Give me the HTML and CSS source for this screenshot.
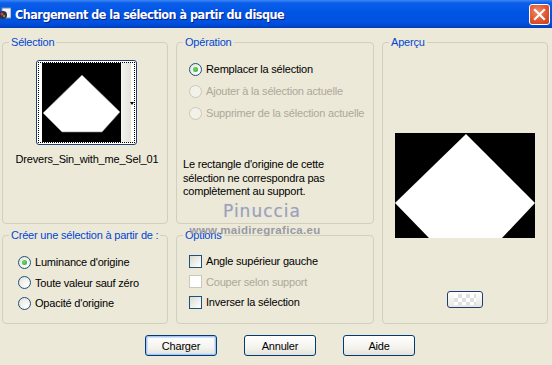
FILE: index.html
```html
<!DOCTYPE html>
<html lang="fr">
<head>
    <meta charset="UTF-8">
    <title>Chargement de la sélection à partir du disque</title>
    <link rel="stylesheet" href="styles.css">
</head>
<body>
<div class="window">
    <div class="titlebar">
        <span class="app-icon">
            <svg width="12" height="14" viewBox="0 0 12 14">
                <rect x="3" y="1" width="9" height="10" fill="#f4f4f4" stroke="#7b8ca8"/>
                <circle cx="4" cy="8" r="4" fill="#3a2b48"/>
                <circle cx="3" cy="7" r="1.5" fill="#d04040"/>
                <circle cx="5" cy="9" r="1.2" fill="#40b040"/>
            </svg>
        </span>
        <span class="title">Chargement de la sélection à partir du disque</span>
        <span class="close">
            <svg width="21" height="21" viewBox="0 0 21 21">
                <path d="M6 6 L15 15 M15 6 L6 15" stroke="#fff" stroke-width="2.2" stroke-linecap="square"/>
            </svg>
        </span>
    </div>

    <div class="body">
        <div class="groups">
            <fieldset class="group g-sel">
                <legend>Sélection</legend>
                <div class="thumb">
                    <div class="thumb-inner">
                        <svg class="thumb-img" width="79" height="79" viewBox="0 0 79 79">
                            <rect width="79" height="79" fill="#000"/>
                            <polygon points="40,12 78,49 60,69 20,69 1,50" fill="#fff" stroke="#888" stroke-width="0.6"/>
                        </svg>
                        <div class="thumb-strip"></div>
                        <span class="thumb-arrow"></span>
                    </div>
                </div>
                <div class="thumb-name">Drevers_Sin_with_me_Sel_01</div>
            </fieldset>

            <fieldset class="group g-op">
                <legend>Opération</legend>
                <div class="choices">
                    <label class="row"><span class="radio checked"></span>Remplacer la sélection</label>
                    <label class="row disabled"><span class="radio"></span>Ajouter à la sélection actuelle</label>
                    <label class="row disabled"><span class="radio"></span>Supprimer de la sélection actuelle</label>
                </div>
                <p class="hint">Le rectangle d'origine de cette<br>sélection ne correspondra pas<br>complètement au support.</p>
            </fieldset>

            <fieldset class="group g-prev">
                <legend>Aperçu</legend>
                <svg class="preview" width="140" height="105" viewBox="0 0 140 105">
                    <rect width="140" height="105" fill="#000"/>
                    <polygon points="71,1 140,70 107,105 34,105 0,70" fill="#fff"/>
                </svg>
                <span class="zoom-btn"><span class="checker"></span></span>
            </fieldset>

            <fieldset class="group g-src">
                <legend>Créer une sélection à partir de :</legend>
                <div class="choices tight">
                    <label class="row"><span class="radio checked"></span>Luminance d'origine</label>
                    <label class="row"><span class="radio"></span>Toute valeur sauf zéro</label>
                    <label class="row"><span class="radio"></span>Opacité d'origine</label>
                </div>
            </fieldset>

            <fieldset class="group g-opt">
                <legend>Options</legend>
                <div class="choices tight">
                    <label class="row"><span class="check"></span>Angle supérieur gauche</label>
                    <label class="row disabled"><span class="check"></span>Couper selon support</label>
                    <label class="row"><span class="check"></span>Inverser la sélection</label>
                </div>
            </fieldset>
        </div>

        <div class="buttons">
            <button class="btn default">Charger</button>
            <button class="btn">Annuler</button>
            <button class="btn">Aide</button>
        </div>
    </div>

    <div class="watermark">
        <span class="wm-name">Pinuccia</span>
        <span class="wm-url">www.maidiregrafica.eu</span>
    </div>
</div>
</body>
</html>
```

FILE: styles.css
```css
* { box-sizing: border-box; }
body { margin: 0; background: #ECE9D8; font-family: 'Liberation Sans', Arial, sans-serif; font-size: 11px; letter-spacing: -0.2px; color: #000; }
.window { position: relative; width: 552px; height: 365px; background: #ECE9D8; overflow: hidden; white-space: nowrap; }

/* title bar */
.titlebar {
    height: 28px;
    display: flex;
    align-items: center;
    background: linear-gradient(#3d86f5 0, #0a5ee8 3px, #0055e5 12px, #0052e0 22px, #0047d0 26px, #003cb8 28px);
}
.app-icon { width: 13px; height: 14px; display: flex; margin-left: -1px; }
.title {
    margin-left: 3px;
    color: #fff;
    font-family: 'DejaVu Sans Condensed', 'DejaVu Sans', sans-serif;
    font-weight: bold;
    font-size: 12.5px;
    letter-spacing: -0.5px;
    text-shadow: 1px 1px 0 #0a1e8a;
}
.close {
    margin-left: auto;
    margin-right: 2px;
    width: 21px;
    height: 21px;
    border: 1px solid #fff;
    border-radius: 3px;
    background: radial-gradient(circle at 40% 35%, #f08a6a 0, #e0552d 55%, #c2401c 100%);
    display: flex;
    align-items: center;
    justify-content: center;
}
.close svg { margin: -1px; }

/* layout */
.body { padding: 7px 3px 0 2px; }
.groups {
    display: grid;
    grid-template-columns: 166px 198px 166px;
    grid-template-rows: 189px 96px;
    column-gap: 8px;
    row-gap: 4px;
}
.group {
    margin: 0;
    padding: 0;
    min-width: 0;
    border: 1px solid #D0D0BF;
    border-radius: 4px;
}
.group legend {
    margin-left: 6px;
    padding: 0 2px;
    color: #0046D5;
    line-height: 14px;
}
.g-prev { grid-column: 3; grid-row: 1 / 3; display: flex; flex-direction: column; align-items: center; }
.g-src { grid-column: 1; grid-row: 2; }
.g-opt { grid-column: 2; grid-row: 2; }

/* selection thumbnail */
.g-sel { display: flex; flex-direction: column; align-items: center; }
.thumb {
    margin-top: 11px;
    margin-left: 2px;
    width: 101px;
    height: 85px;
    border: 1px solid #1c3f73;
    border-radius: 3px;
    padding: 1px;
    background: #fff;
}
.thumb-inner {
    position: relative;
    height: 100%;
    border: 1px dotted #000;
    display: flex;
    padding-left: 3px;
}
.thumb-img { display: block; }
.thumb-strip { width: 10px; background: linear-gradient(90deg, #f4f4f0, #e4e4dc); }
.thumb-arrow {
    position: absolute;
    right: 0;
    top: 39px;
    border-left: 2px solid transparent;
    border-right: 2px solid transparent;
    border-top: 3px solid #000;
}
.thumb-name { margin-top: 8px; margin-left: 4px; }

/* radio and check rows */
.choices { padding: 9px 0 0 12px; }
.g-src .choices { padding-left: 15px; padding-top: 10px; }
.row { display: flex; align-items: center; height: 22px; gap: 4px; }
.tight .row { height: 20.5px; }
.row.disabled { color: #ACA899; }
.radio {
    width: 13px;
    height: 13px;
    border-radius: 50%;
    border: 1px solid #1C5180;
    background: radial-gradient(circle at 70% 70%, #fff 0, #e8e6dc 80%);
    display: flex;
    align-items: center;
    justify-content: center;
}
.radio.checked::after {
    content: "";
    width: 5px;
    height: 5px;
    border-radius: 50%;
    background: radial-gradient(circle at 40% 40%, #6de06d, #21a121);
}
.row.disabled .radio { border-color: #CAC8BB; background: #F2F1EA; }
.check {
    width: 13px;
    height: 13px;
    border: 1px solid #1C5180;
    background: linear-gradient(135deg, #dcdbd2, #fff);
    margin-right: 0;
}
.row.disabled .check { border-color: #CAC8BB; background: #fff; }

.hint { margin: 34px 0 0 6px; line-height: 13.5px; }

/* preview */
.preview { margin-top: 84px; display: block; }
.zoom-btn {
    margin-top: 53px;
    width: 36px;
    height: 17px;
    border: 1px solid #1c3f73;
    border-radius: 3px;
    background: linear-gradient(#fff, #e8e6de);
    display: flex;
    align-items: center;
    justify-content: center;
}
.checker {
    width: 22px;
    height: 11px;
    background-image: conic-gradient(#e0e0e0 25%, #fff 0 50%, #e0e0e0 0 75%, #fff 0);
    background-size: 8px 8px;
}

/* buttons */
.buttons { display: flex; justify-content: center; gap: 27px; margin-top: 11px; padding-left: 9px; }
.btn {
    width: 72px;
    height: 21px;
    padding: 0;
    font-family: inherit;
    font-size: 11px;
    letter-spacing: -0.2px;
    color: #000;
    border: 1px solid #003C74;
    border-radius: 3px;
    background: linear-gradient(#fff 0, #f4f3ee 60%, #e4e2d8 100%);
}
.btn.default { box-shadow: inset 0 0 0 1px #a8c6f2, inset 0 0 0 2px #cfe0fb; }

/* watermark over the dialog */
.watermark {
    position: absolute;
    left: 192px;
    top: 201px;
    width: 130px;
    display: flex;
    flex-direction: column;
    align-items: center;
    pointer-events: none;
    letter-spacing: 0;
}
.wm-name {
    font-family: 'DejaVu Sans', sans-serif;
    font-size: 17px;
    color: #9ca1bb;
    letter-spacing: 1px;
    line-height: 20px;
    margin-left: 10px;
    text-shadow: 0 0 1px #c8cad8;
}
.wm-url {
    font-family: 'Liberation Sans', sans-serif;
    font-size: 11.5px;
    font-weight: bold;
    color: #9a9aa4;
    letter-spacing: 0.3px;
    line-height: 14px;
    margin-top: 2px;
    margin-right: 4px;
}
```
